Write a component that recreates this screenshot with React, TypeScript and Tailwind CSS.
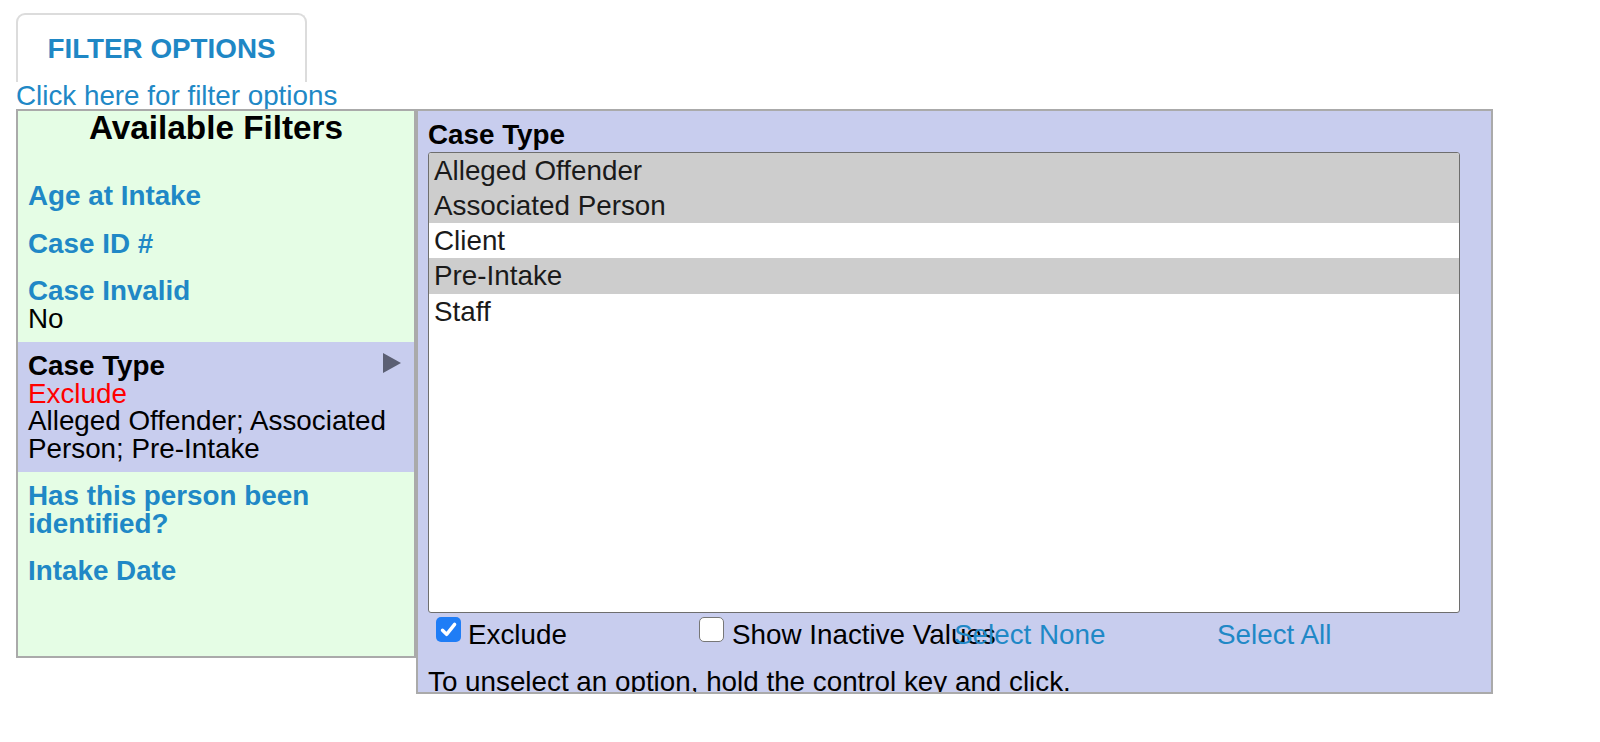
import React, { useState } from 'react';

const options = ['Alleged Offender', 'Associated Person', 'Client', 'Pre-Intake', 'Staff'];

const filters = [
  { label: 'Age at Intake' },
  { label: 'Case ID #' },
  { label: 'Case Invalid', value: 'No' },
  { label: 'Case Type', exclude: true, value: 'Alleged Offender; Associated Person; Pre-Intake', active: true },
  { label: 'Has this person been identified?' },
  { label: 'Intake Date' },
];

const Check: React.FC<{ checked: boolean; onChange: () => void }> = ({ checked, onChange }) => (
  <span className="relative inline-block w-[25px] h-[25px] shrink-0 mt-[-4px]">
    <input
      type="checkbox"
      checked={checked}
      onChange={onChange}
      className={`appearance-none block w-[25px] h-[25px] rounded-[5px] m-0 ${
        checked ? 'bg-[#1f7df6]' : 'bg-white border-[1.5px] border-[#777]'
      }`}
    />
    {checked && (
      <svg viewBox="0 0 25 25" className="absolute inset-0 w-[25px] h-[25px] pointer-events-none">
        <path d="M6.5 13.2 L10.6 17.4 L18.6 7.4" fill="none" stroke="#fff" strokeWidth="3.4" strokeLinecap="round" strokeLinejoin="round" />
      </svg>
    )}
  </span>
);

export default function App() {
  const [selected, setSelected] = useState<string[]>(['Alleged Offender', 'Associated Person', 'Pre-Intake']);
  const [exclude, setExclude] = useState(true);
  const [showInactive, setShowInactive] = useState(false);

  const toggle = (o: string) =>
    setSelected((s) => (s.includes(o) ? s.filter((x) => x !== o) : [...s, o]));

  return (
    <div className="min-h-screen bg-white pl-4 pt-[13px] font-['Liberation_Sans',Arial,sans-serif] text-[27.8px] leading-[27.5px] text-black">
      <div className="w-[291px] h-[69px] border-2 border-b-0 border-[#dcdcdc] rounded-t-[9px] flex items-center justify-center">
        <span className="font-bold text-[#1f87c5]">FILTER OPTIONS</span>
      </div>
      <a href="#" className="block h-[27px] leading-[27px] text-[#2088c6] w-max">
        Click here for filter options
      </a>

      <div className="flex items-start">
        {/* left: available filters */}
        <div className="w-[400px] h-[549px] border-2 border-[#aaa] bg-[#e5fde5] overflow-hidden">
          <h3 className="text-center font-bold text-[33.3px] leading-[33px] mb-[28px]">Available Filters</h3>
          {filters.map((f) => (
            <div key={f.label} className={`px-[10px] py-[10px] ${f.active ? 'bg-[#c8cdee]' : ''}`}>
              <div className="flex justify-between items-start">
                <span className={`font-bold ${f.active ? 'text-black' : 'text-[#2088c6]'}`}>{f.label}</span>
                {f.active && (
                  <svg viewBox="0 0 18 20" className="w-[18px] h-[20px] mt-[1px] mr-[3px] shrink-0">
                    <path d="M0 0 L18 10 L0 20 Z" fill="#5b5f73" />
                  </svg>
                )}
              </div>
              {f.exclude && <div className="text-[#ff0000]">Exclude</div>}
              {f.value && <div>{f.value}</div>}
            </div>
          ))}
        </div>

        {/* right: case type editor */}
        <div className="w-[1077px] h-[585px] border-2 border-[#aaa] bg-[#c8cdee] overflow-hidden pl-[10px] pt-[10px]">
          <div className="font-bold mb-[3px]">Case Type</div>
          <div className="w-[1032px] h-[461px] bg-white border-[1.5px] border-[#6e6e6e] rounded-[3px] overflow-hidden">
            {options.map((o) => (
              <div
                key={o}
                onClick={() => toggle(o)}
                className={`h-[35.3px] leading-[35px] pl-[5px] text-[#1a1a1a] cursor-default ${
                  selected.includes(o) ? 'bg-[#cdcdcd]' : 'bg-white'
                }`}
              >
                {o}
              </div>
            ))}
          </div>

          <div className="grid grid-cols-[263px_263px_263px_263px] pt-[8px]">
            <label className="flex items-start gap-[7px] pl-[8px] whitespace-nowrap">
              <Check checked={exclude} onChange={() => setExclude(!exclude)} />
              <span>Exclude</span>
            </label>
            <label className="flex items-start gap-[8px] pl-[8px] whitespace-nowrap">
              <Check checked={showInactive} onChange={() => setShowInactive(!showInactive)} />
              <span>Show Inactive Values</span>
            </label>
            <a href="#" onClick={() => setSelected([])} className="text-[#2088c6] whitespace-nowrap">
              Select None
            </a>
            <a href="#" onClick={() => setSelected(options)} className="text-[#2088c6] whitespace-nowrap">
              Select All
            </a>
          </div>

          <p className="mt-[20px] whitespace-nowrap">To unselect an option, hold the control key and click.</p>
        </div>
      </div>
    </div>
  );
}
